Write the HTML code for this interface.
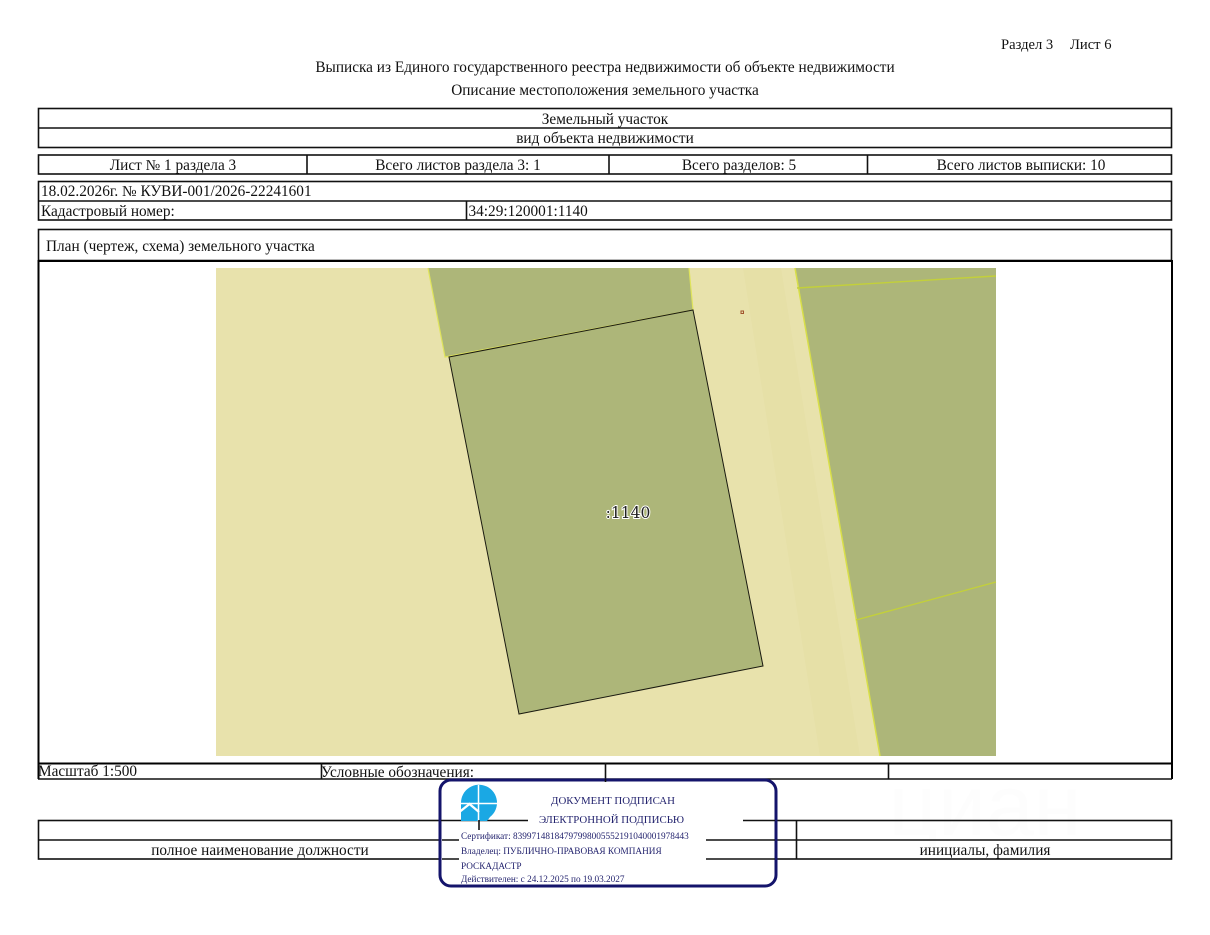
<!DOCTYPE html>
<html lang="ru"><head><meta charset="utf-8"><title>Выписка</title>
<style>
html,body{margin:0;padding:0;background:#fff;width:1210px;height:935px;overflow:hidden}
svg{display:block;position:absolute;left:0;top:0}
text{font-family:"Liberation Serif","Noto Serif CJK SC",serif;fill:#111;font-size:15.3px}
.c{text-anchor:middle}
.s{fill:#23236e;font-size:9.25px}
</style></head><body>
<svg width="1210" height="935" viewBox="0 0 1210 935" xmlns="http://www.w3.org/2000/svg">
<rect width="1210" height="935" fill="#fff"/>
<text x="1001" y="49" style="font-size:14.6px">Раздел 3</text>
<text x="1070" y="49" style="font-size:14.6px">Лист 6</text>
<text x="605" y="72" class="c">Выписка из Единого государственного реестра недвижимости об объекте недвижимости</text>
<text x="605" y="95" class="c">Описание местоположения земельного участка</text>

<!-- map -->
<rect x="216" y="268" width="780" height="488" fill="#e8e2ac"/>
<polygon points="743,268 781,268 860,756 820,756" fill="#e6e0a7"/>
<polygon points="795,268 996,268 996,756 880,756" fill="#adb679"/>
<polygon points="428,268 689,268 693,310 445,357" fill="#adb679"/>
<path d="M428,268 L445,357 L693,310 L689,268" fill="none" stroke="#dfe45c" stroke-width="1.200"/>
<path d="M795,268 L880,756" stroke="#d8df48" stroke-width="1.500" fill="none"/>
<path d="M797,288 L996,276 M856,620 L996,582" stroke="#c3d03a" stroke-width="1.400" fill="none"/>
<polygon points="449,357 693,310 763,666 519,714" fill="#adb679" stroke="#1a1a10" stroke-width="1"/>
<rect x="741" y="311" width="2.500" height="2.500" fill="#e8e2ac" stroke="#a0522d" stroke-width="1"/>
<text x="628" y="518" class="c" style="font-size:15.500px;font-family:'DejaVu Serif',serif;paint-order:stroke;stroke:#fff;stroke-width:2px;fill:#222">:1140</text>

<!-- faint watermark -->
<text x="985" y="835" class="c" style="font-size:86px;font-family:'Liberation Sans',sans-serif;fill:#fdfdfd">циан</text>

<!-- table lines -->
<g fill="none" stroke="#111" stroke-width="1.600">
<rect x="38.500" y="108.500" width="1133" height="39"/>
<path d="M38 128H1172"/>
<rect x="38.500" y="155" width="1133" height="19"/>
<path d="M307 155V174M609 155V174M867.500 155V174"/>
<rect x="38.500" y="181.500" width="1133" height="38.500"/>
<path d="M38 201H1172M466.500 201V220"/>
<rect x="38.500" y="229.500" width="1133" height="31"/>
</g>
<g fill="none" stroke="#000" stroke-width="2">
<path d="M38 261H1172M38.500 260V779M1172 260V779M38 763.500H1172"/>
</g>
<g fill="none" stroke="#111" stroke-width="1.600">
<path d="M38 779H1172M321.500 763V779M605.500 763V779M888.500 763V779"/>
<rect x="38.500" y="820.500" width="1133" height="38.500"/>
<path d="M38 840H1172M796.500 820V859"/>
</g>

<!-- table text -->
<text x="605" y="124" class="c">Земельный участок</text>
<text x="605" y="143" class="c">вид объекта недвижимости</text>
<text x="173" y="170" class="c">Лист № 1 раздела 3</text>
<text x="458" y="170" class="c">Всего листов раздела 3: 1</text>
<text x="739" y="170" class="c">Всего разделов: 5</text>
<text x="1021" y="170" class="c">Всего листов выписки: 10</text>
<text x="41" y="196">18.02.2026г. № КУВИ-001/2026-22241601</text>
<text x="41" y="216">Кадастровый номер:</text>
<text x="468.500" y="216">34:29:120001:1140</text>
<text x="46" y="251">План (чертеж, схема) земельного участка</text>
<text x="38" y="776">Масштаб 1:500</text>
<text x="321" y="777">Условные обозначения:</text>
<text x="260" y="855" class="c">полное наименование должности</text>
<text x="985" y="855" class="c">инициалы, фамилия</text>

<!-- stamp -->
<rect x="440" y="780" width="336" height="106" rx="11" fill="#fff" stroke="#14146b" stroke-width="3"/>
<path d="M441 820.500H528M743 820.500H775M442 840H459M706 840H775M442 859H459M706 859H775" stroke="#111" stroke-width="1.500" fill="none"/>
<path d="M605.500 779V782" stroke="#111" stroke-width="1.600"/>
<path d="M461 803 A18 18 0 1 1 490 817 L487 821 L461 821 Z" fill="#1aa8e4"/>
<path d="M478.500 785V821M461 803.500H497" stroke="#fff" stroke-width="1.500" fill="none"/>
<path d="M460 811.500 L469.500 804 L479 812" stroke="#fff" stroke-width="2.300" fill="none"/>
<path d="M479 820V830" stroke="#111" stroke-width="1.600"/>
<text x="613" y="804" class="c" style="font-size:10.850px;fill:#23236e">ДОКУМЕНТ ПОДПИСАН</text>
<text x="611.500" y="823" class="c" style="font-size:10.850px;fill:#23236e">ЭЛЕКТРОННОЙ ПОДПИСЬЮ</text>
<text x="461" y="839" class="s">Сертификат: 83997148184797998005552191040001978443</text>
<text x="461" y="854" class="s">Владелец: ПУБЛИЧНО-ПРАВОВАЯ КОМПАНИЯ</text>
<text x="461" y="869" class="s">РОСКАДАСТР</text>
<text x="461" y="882" class="s">Действителен: с 24.12.2025 по 19.03.2027</text>
</svg>
</body></html>
